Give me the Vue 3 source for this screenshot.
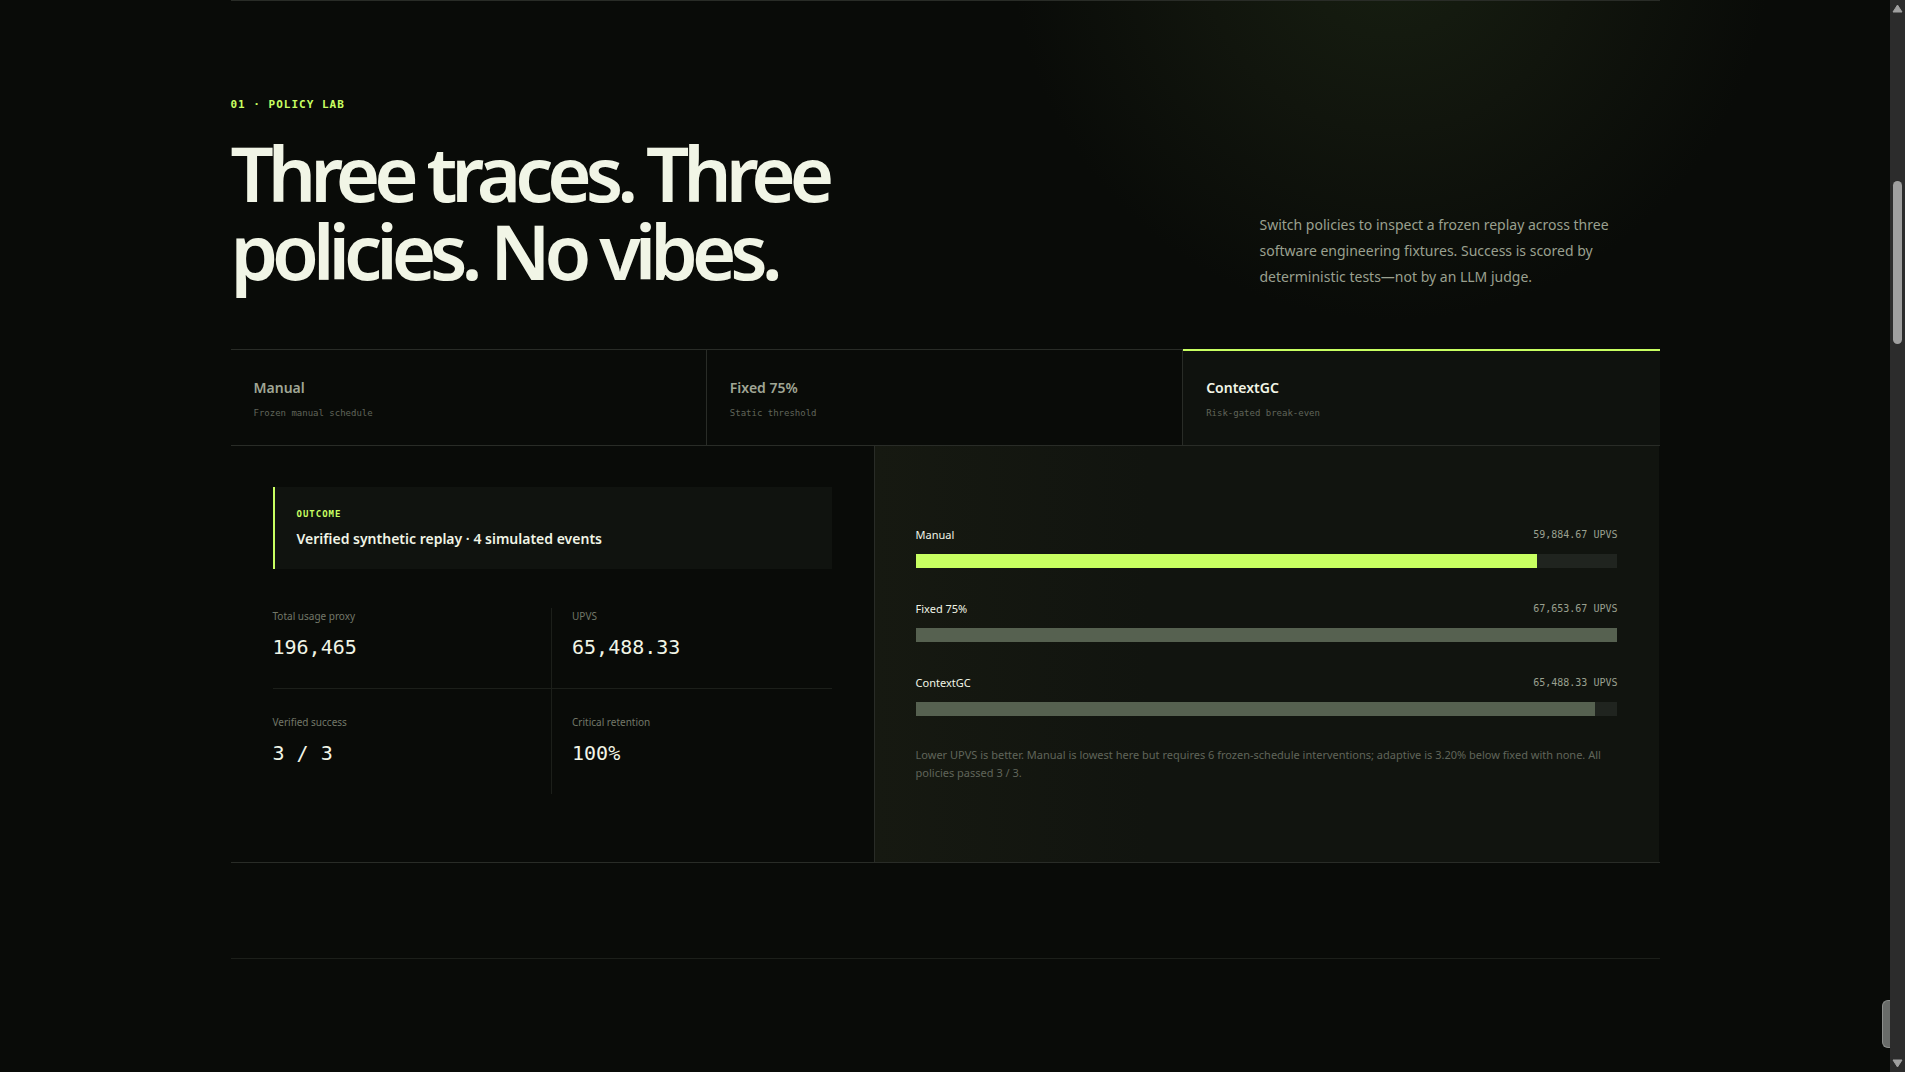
<script setup>
import { ref } from 'vue'

const policies = [
  { name: 'Manual', note: 'Frozen manual schedule' },
  { name: 'Fixed 75%', note: 'Static threshold' },
  { name: 'ContextGC', note: 'Risk-gated break-even' },
]
const active = ref('ContextGC')

const metrics = [
  { label: 'Total usage proxy', value: '196,465' },
  { label: 'UPVS', value: '65,488.33' },
  { label: 'Verified success', value: '3 / 3' },
  { label: 'Critical retention', value: '100%' },
]

const worst = 67653.67
const bars = [
  { name: 'Manual', value: 59884.67, best: true },
  { name: 'Fixed 75%', value: 67653.67 },
  { name: 'ContextGC', value: 65488.33 },
]
const format = (n) => n.toLocaleString('en-US', { minimumFractionDigits: 2 })
const share = (n) => `${((n / worst) * 100).toFixed(1)}%`
</script>

<template>
  <div class="page">
    <main class="wrap">
      <section class="lab">
        <p class="eyebrow">01 · POLICY LAB</p>
        <header class="head">
          <h2>Three traces. Three<br />policies. No vibes.</h2>
          <p class="intro">
            Switch policies to inspect a frozen replay across three software
            engineering fixtures. Success is scored by deterministic tests—not by
            an LLM judge.
          </p>
        </header>

        <div class="tabs" role="tablist">
          <button
            v-for="p in policies"
            :key="p.name"
            type="button"
            role="tab"
            class="tab"
            :class="{ on: p.name === active }"
            :aria-selected="p.name === active"
            @click="active = p.name"
          >
            <span class="tab-name">{{ p.name }}</span>
            <span class="tab-note">{{ p.note }}</span>
          </button>
        </div>

        <div class="panel">
          <div class="summary">
            <div class="outcome">
              <span class="outcome-tag">OUTCOME</span>
              <strong>Verified synthetic replay · 4 simulated events</strong>
            </div>
            <dl class="metrics">
              <div v-for="m in metrics" :key="m.label" class="metric">
                <dt>{{ m.label }}</dt>
                <dd>{{ m.value }}</dd>
              </div>
            </dl>
          </div>

          <div class="chart">
            <div v-for="b in bars" :key="b.name" class="row">
              <div class="row-head">
                <span>{{ b.name }}</span>
                <span class="row-value">{{ format(b.value) }} UPVS</span>
              </div>
              <div class="track">
                <div class="fill" :class="{ best: b.best }" :style="{ width: share(b.value) }"></div>
              </div>
            </div>
            <p class="caption">
              Lower UPVS is better. Manual is lowest here but requires 6
              frozen-schedule interventions; adaptive is 3.20% below fixed with
              none. All policies passed 3 / 3.
            </p>
          </div>
        </div>
      </section>
      <section class="next"></section>
    </main>

    <div class="handle"></div>
    <div class="scrollbar">
      <svg width="11" height="9" viewBox="0 0 11 9"><path d="M5.5 1 10 8H1Z" /></svg>
      <div class="thumb"></div>
      <svg width="11" height="9" viewBox="0 0 11 9"><path d="M5.5 8 10 1H1Z" /></svg>
    </div>
  </div>
</template>

<style>
body {
  background: #090b08;
}
</style>

<style scoped>
* {
  box-sizing: border-box;
}

.page {
  --sans: 'Noto Sans', 'Open Sans', sans-serif;
  --mono: 'DejaVu Sans Mono', monospace;
  --lime: #c8ff61;
  --ink: #f1f5e6;
  --line: #292c27;
  min-height: 100vh;
  padding-right: 15px;
  overflow: hidden;
  color: var(--ink);
  font-family: var(--sans);
  background: radial-gradient(circle 380px at 73% -60px, #171f11, #11150d 50%, #090b08) #090b08;
}

.wrap {
  max-width: 1429px;
  margin: 0 auto;
}

.lab {
  padding: 96px 0 95px;
  border-top: 1px solid var(--line);
}

.eyebrow {
  margin: 0;
  color: var(--lime);
  font: 700 11px/16px var(--mono);
  letter-spacing: 1px;
}

.head {
  display: flex;
  justify-content: space-between;
  align-items: flex-end;
  margin-top: 21px;
  padding-bottom: 59px;
}

h2 {
  margin: 0;
  font-size: 76px;
  font-weight: 600;
  line-height: 78px;
  letter-spacing: -6px;
}

.intro {
  width: 400px;
  margin: 0;
  padding-right: 40px;
  color: #9aa08f;
  font-size: 14px;
  line-height: 26px;
}

.tabs {
  display: grid;
  grid-template-columns: repeat(3, 1fr);
  border-top: 1px solid var(--line);
  border-bottom: 1px solid var(--line);
}

.tab {
  position: relative;
  display: flex;
  flex-direction: column;
  gap: 7px;
  padding: 26px 23px 25px;
  border: 0;
  border-right: 1px solid var(--line);
  background: none;
  color: #a0a695;
  text-align: left;
  cursor: pointer;
}

.tab:last-child {
  border-right: 0;
}

.tab.on {
  background: #0f120e;
  color: var(--ink);
}

.tab.on::before {
  content: '';
  position: absolute;
  inset: -1px 0 auto;
  height: 2px;
  background: var(--lime);
}

.tab-name {
  font: 600 14px/24px var(--sans);
}

.tab-note {
  color: #60655a;
  font: 9px/13px var(--mono);
}

.panel {
  display: grid;
  grid-template-columns: 9fr 11fr;
  min-height: 417px;
  border-bottom: 1px solid var(--line);
}

.summary {
  padding: 41px 42px;
}

.outcome {
  display: flex;
  flex-direction: column;
  gap: 6px;
  padding: 20px 22px 18px;
  border-left: 2px solid var(--lime);
  background: #10130f;
}

.outcome-tag {
  color: var(--lime);
  font: 700 9px/14px var(--mono);
  letter-spacing: 1px;
}

.outcome strong {
  font-size: 14px;
  font-weight: 600;
  line-height: 24px;
}

.metrics {
  display: grid;
  grid-template-columns: 1fr 1fr;
  margin: 39px 0 0;
}

.metric {
  padding: 25px 0 25px 20px;
}

.metric:nth-child(odd) {
  padding-left: 0;
  border-right: 1px solid #1c1f1a;
}

.metric:nth-child(-n + 2) {
  padding-top: 0;
  border-bottom: 1px solid #1c1f1a;
}

dt {
  color: #737869;
  font-size: 10px;
  line-height: 16px;
}

dd {
  margin: 7px 0 0;
  font: 20px/32px var(--mono);
}

.chart {
  display: flex;
  flex-direction: column;
  justify-content: center;
  gap: 30px;
  padding: 0 42px 2px 41px;
  border-left: 1px solid var(--line);
  background: linear-gradient(90deg, #161911, #11140f 35%);
}

.row-head {
  display: flex;
  justify-content: space-between;
  align-items: center;
  margin-bottom: 8px;
  font-size: 11px;
  line-height: 22px;
}

.row-value {
  color: #9aa08f;
  font: 10px/22px var(--mono);
}

.track {
  height: 14px;
  background: #20241f;
}

.fill {
  height: 100%;
  background: #566150;
}

.fill.best {
  background: var(--lime);
}

.caption {
  margin: 0;
  color: #60655a;
  font-size: 11px;
  line-height: 18px;
}

.next {
  border-top: 1px solid #1c1f1a;
}

.handle {
  position: fixed;
  right: 15px;
  bottom: 24px;
  width: 8px;
  height: 48px;
  border: 1px solid #8c8f8c;
  border-right: 0;
  border-radius: 6px 0 0 6px;
  background: #696c69;
}

.scrollbar {
  position: fixed;
  inset: 0 0 0 auto;
  display: flex;
  flex-direction: column;
  align-items: center;
  justify-content: space-between;
  width: 15px;
  padding: 4px 0;
  background: #2c2c2c;
}

.scrollbar svg {
  fill: #a0a0a0;
  stroke: #a0a0a0;
  stroke-linejoin: round;
}

.thumb {
  width: 9px;
  height: 163px;
  margin: 168px 0 auto;
  border-radius: 5px;
  background: #9f9f9f;
}
</style>
